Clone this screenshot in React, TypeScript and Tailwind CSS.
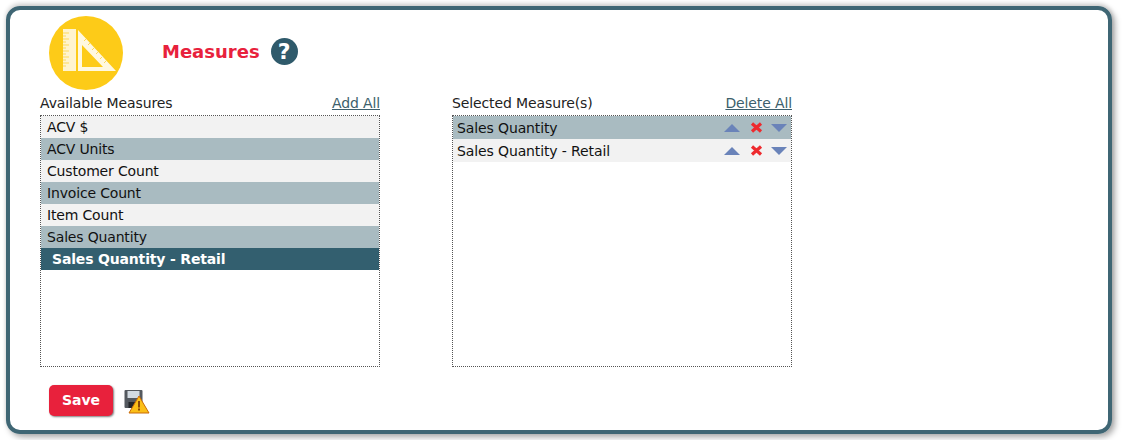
const available = [
  "ACV $",
  "ACV Units",
  "Customer Count",
  "Invoice Count",
  "Item Count",
  "Sales Quantity",
];

const selected = ["Sales Quantity", "Sales Quantity - Retail"];

function RulerLogo() {
  return (
    <svg viewBox="0 0 74 74" className="w-[74px] h-[74px] block">
      <circle cx="37" cy="37" r="37" fill="#fdcb18" />
      <rect x="14" y="13" width="13" height="42" fill="#fff4cf" />
      <path d="M14 17h6M14 20h3M14 23h6M14 26h3M14 29h6M14 32h3M14 35h6M14 38h3M14 41h6M14 44h3M14 47h6M14 50h3" stroke="#fdd95c" strokeWidth="1" />
      <path fillRule="evenodd" d="M29 14 L67 55 H29 Z M33 29 V51 H54 Z" fill="#fff8e0" />
      <path d="M37 23l-2 2M41 27l-2 2M45 32l-2 2M49 36l-2 2M53 41l-2 2M57 45l-2 2" stroke="#fdd95c" strokeWidth="1" />
    </svg>
  );
}

function SaveWarning() {
  return (
    <svg viewBox="0 0 26 26" className="w-[26px] h-[26px] block">
      <rect x="0.5" y="2" width="18" height="18" rx="1" fill="#54595f" />
      <rect x="3.5" y="3" width="12" height="7" fill="#d3dbe2" />
      <rect x="4.5" y="14" width="7" height="6" fill="#23262a" />
      <path d="M15 8 L25 25 H5 Z" fill="#fbbf17" stroke="#c96a08" strokeWidth="1" strokeLinejoin="round" />
      <rect x="14" y="13" width="2" height="6.5" fill="#8a4a08" />
      <rect x="14" y="20.5" width="2" height="2" fill="#8a4a08" />
    </svg>
  );
}

function Arrow({ down }: { down?: boolean }) {
  return (
    <svg viewBox="0 0 16 8" className="w-4 h-2 block">
      <path d={down ? "M0 0H16L8 8Z" : "M0 8H16L8 0Z"} fill="#6a83b9" />
    </svg>
  );
}

function Cross() {
  return (
    <svg viewBox="0 0 13 11" className="w-[13px] h-[11px] block">
      <path d="M2 1.5L11 9.5M11 1.5L2 9.5" stroke="#ee2a2e" strokeWidth="3.2" />
    </svg>
  );
}

function ListHeader({ title, action }: { title: string; action: string }) {
  return (
    <div className="flex justify-between items-start h-[22px] text-[14px] text-[#222] leading-[21px] tracking-[-0.12px]">
      <span>{title}</span>
      <a className="text-[#3d5f6c] underline">{action}</a>
    </div>
  );
}

function HelpCircleSolid() {
  return (
    <span className="ml-[11px] mb-[3px] w-[27px] h-[27px] rounded-full bg-[#2f5a6b] flex items-center justify-center text-white text-[22px] font-bold leading-none">
      ?
    </span>
  );
}

export default function App() {
  return (
    <div className="w-[1126px] h-[440px] bg-white overflow-hidden font-['DejaVu_Sans',Verdana,sans-serif]">
      <div className="ml-[6px] mt-[6px] w-[1106px] h-[428px] border-[4px] border-[#3f6674] rounded-[14px] shadow-[3px_3px_6px_rgba(0,0,0,0.35),0_-3px_4px_rgba(0,0,0,0.14)] pl-[30px] pt-[6px]">
        <div className="flex items-center h-[74px] pl-[9px]">
          <RulerLogo />
          <h1 className="ml-[39px] mb-[3px] text-[18px] font-bold text-[#e8213c]">Measures</h1>
          <HelpCircleSolid />
        </div>
        <div className="flex gap-[72px] mt-[3px]">
          <div className="w-[340px]">
            <ListHeader title="Available Measures" action="Add All" />
            <ul className="h-[252px] border border-dotted border-[#555] text-[14px] text-[#111] tracking-[-0.17px]">
              {available.map((item, i) => (
                <li
                  key={item}
                  className={`h-[22px] leading-[22px] pl-[6px] ${i % 2 === 0 ? "bg-[#f2f2f2]" : "bg-[#a9bbc1]"}`}
                >
                  {item}
                </li>
              ))}
              <li className="h-[22px] leading-[22px] pl-[11px] bg-[#335f6f] text-white font-bold">Sales Quantity - Retail</li>
            </ul>
          </div>
          <div className="w-[340px]">
            <ListHeader title="Selected Measure(s)" action="Delete All" />
            <ul className="h-[252px] border border-dotted border-[#555] text-[14px] text-[#111]">
              {selected.map((item, i) => (
                <li
                  key={item}
                  className={`flex items-center justify-between h-[23px] pl-[4px] pr-[4px] ${i % 2 === 0 ? "bg-[#a9bbc1]" : "bg-[#f2f2f2]"}`}
                >
                  <span className="pt-[2px] tracking-[-0.12px]">{item}</span>
                  <span className="flex items-center">
                    <Arrow />
                    <span className="ml-[10px] mr-[8px]">
                      <Cross />
                    </span>
                    <Arrow down />
                  </span>
                </li>
              ))}
            </ul>
          </div>
        </div>
        <div className="flex items-center mt-[18px] ml-[9px]">
          <button className="w-[64px] h-[31px] rounded-[5px] bg-[#e8213c] text-white text-[14px] font-bold shadow-[1px_1px_2px_rgba(0,0,0,0.5)]">
            Save
          </button>
          <span className="ml-[11px]">
            <SaveWarning />
          </span>
        </div>
      </div>
    </div>
  );
}
